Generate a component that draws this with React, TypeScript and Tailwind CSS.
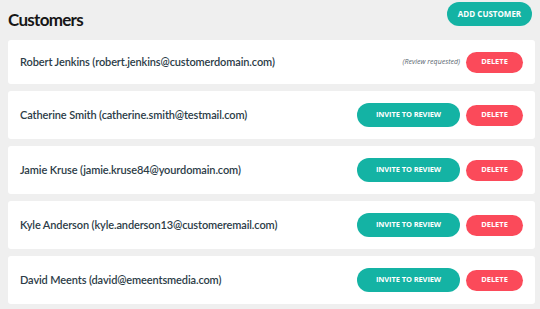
import React from "react";

const customers = [
  { name: "Robert Jenkins", email: "robert.jenkins@customerdomain.com", requested: true },
  { name: "Catherine Smith", email: "catherine.smith@testmail.com", requested: false },
  { name: "Jamie Kruse", email: "jamie.kruse84@yourdomain.com", requested: false },
  { name: "Kyle Anderson", email: "kyle.anderson13@customeremail.com", requested: false },
  { name: "David Meents", email: "david@emeentsmedia.com", requested: false },
];

export default function App() {
  return (
    <div
      className="w-[540px] h-[309px] bg-[#efefef] overflow-hidden pl-[8px] pr-[5px]"
      style={{ fontFamily: 'Lato, "Open Sans", sans-serif' }}
    >
      <div className="h-[40px] flex items-start justify-between pr-[3px]">
        <h1 className="mt-[8px] text-[17px] font-bold text-[#161616] leading-[24px] tracking-[-0.7px]">
          Customers
        </h1>
        <button
          className="mt-[2px] h-[24px] w-[85px] rounded-full bg-[#14b3a4] text-white text-[8px] font-bold uppercase"
          style={{ fontFamily: '"Open Sans", sans-serif' }}
        >
          ADD CUSTOMER
        </button>
      </div>
      <div className="flex flex-col gap-[7px]">
        {customers.map((c, i) => (
          <div
            key={i}
            className={`${c.requested ? "h-[44px]" : "h-[48px]"} bg-white rounded-[3px] flex items-center justify-between pl-[12px] pr-[12px]`}
          >
            <span className="text-[11px] font-semibold text-[#2c3c47] tracking-[-0.12px]">
              {c.name} ({c.email})
            </span>
            <div className="flex items-center gap-[6px]" style={{ fontFamily: '"Open Sans", sans-serif' }}>
              {c.requested ? (
                <span className="text-[7px] italic text-[#5b6770]">(Review requested)</span>
              ) : (
                <button className="h-[24px] w-[103px] rounded-full bg-[#14b3a4] text-white text-[7.5px] font-bold uppercase tracking-[-0.1px]">
                  INVITE TO REVIEW
                </button>
              )}
              <button className="h-[21px] w-[57px] rounded-full bg-[#fb4a5a] text-white text-[7.5px] font-bold uppercase">
                DELETE
              </button>
            </div>
          </div>
        ))}
      </div>
    </div>
  );
}
